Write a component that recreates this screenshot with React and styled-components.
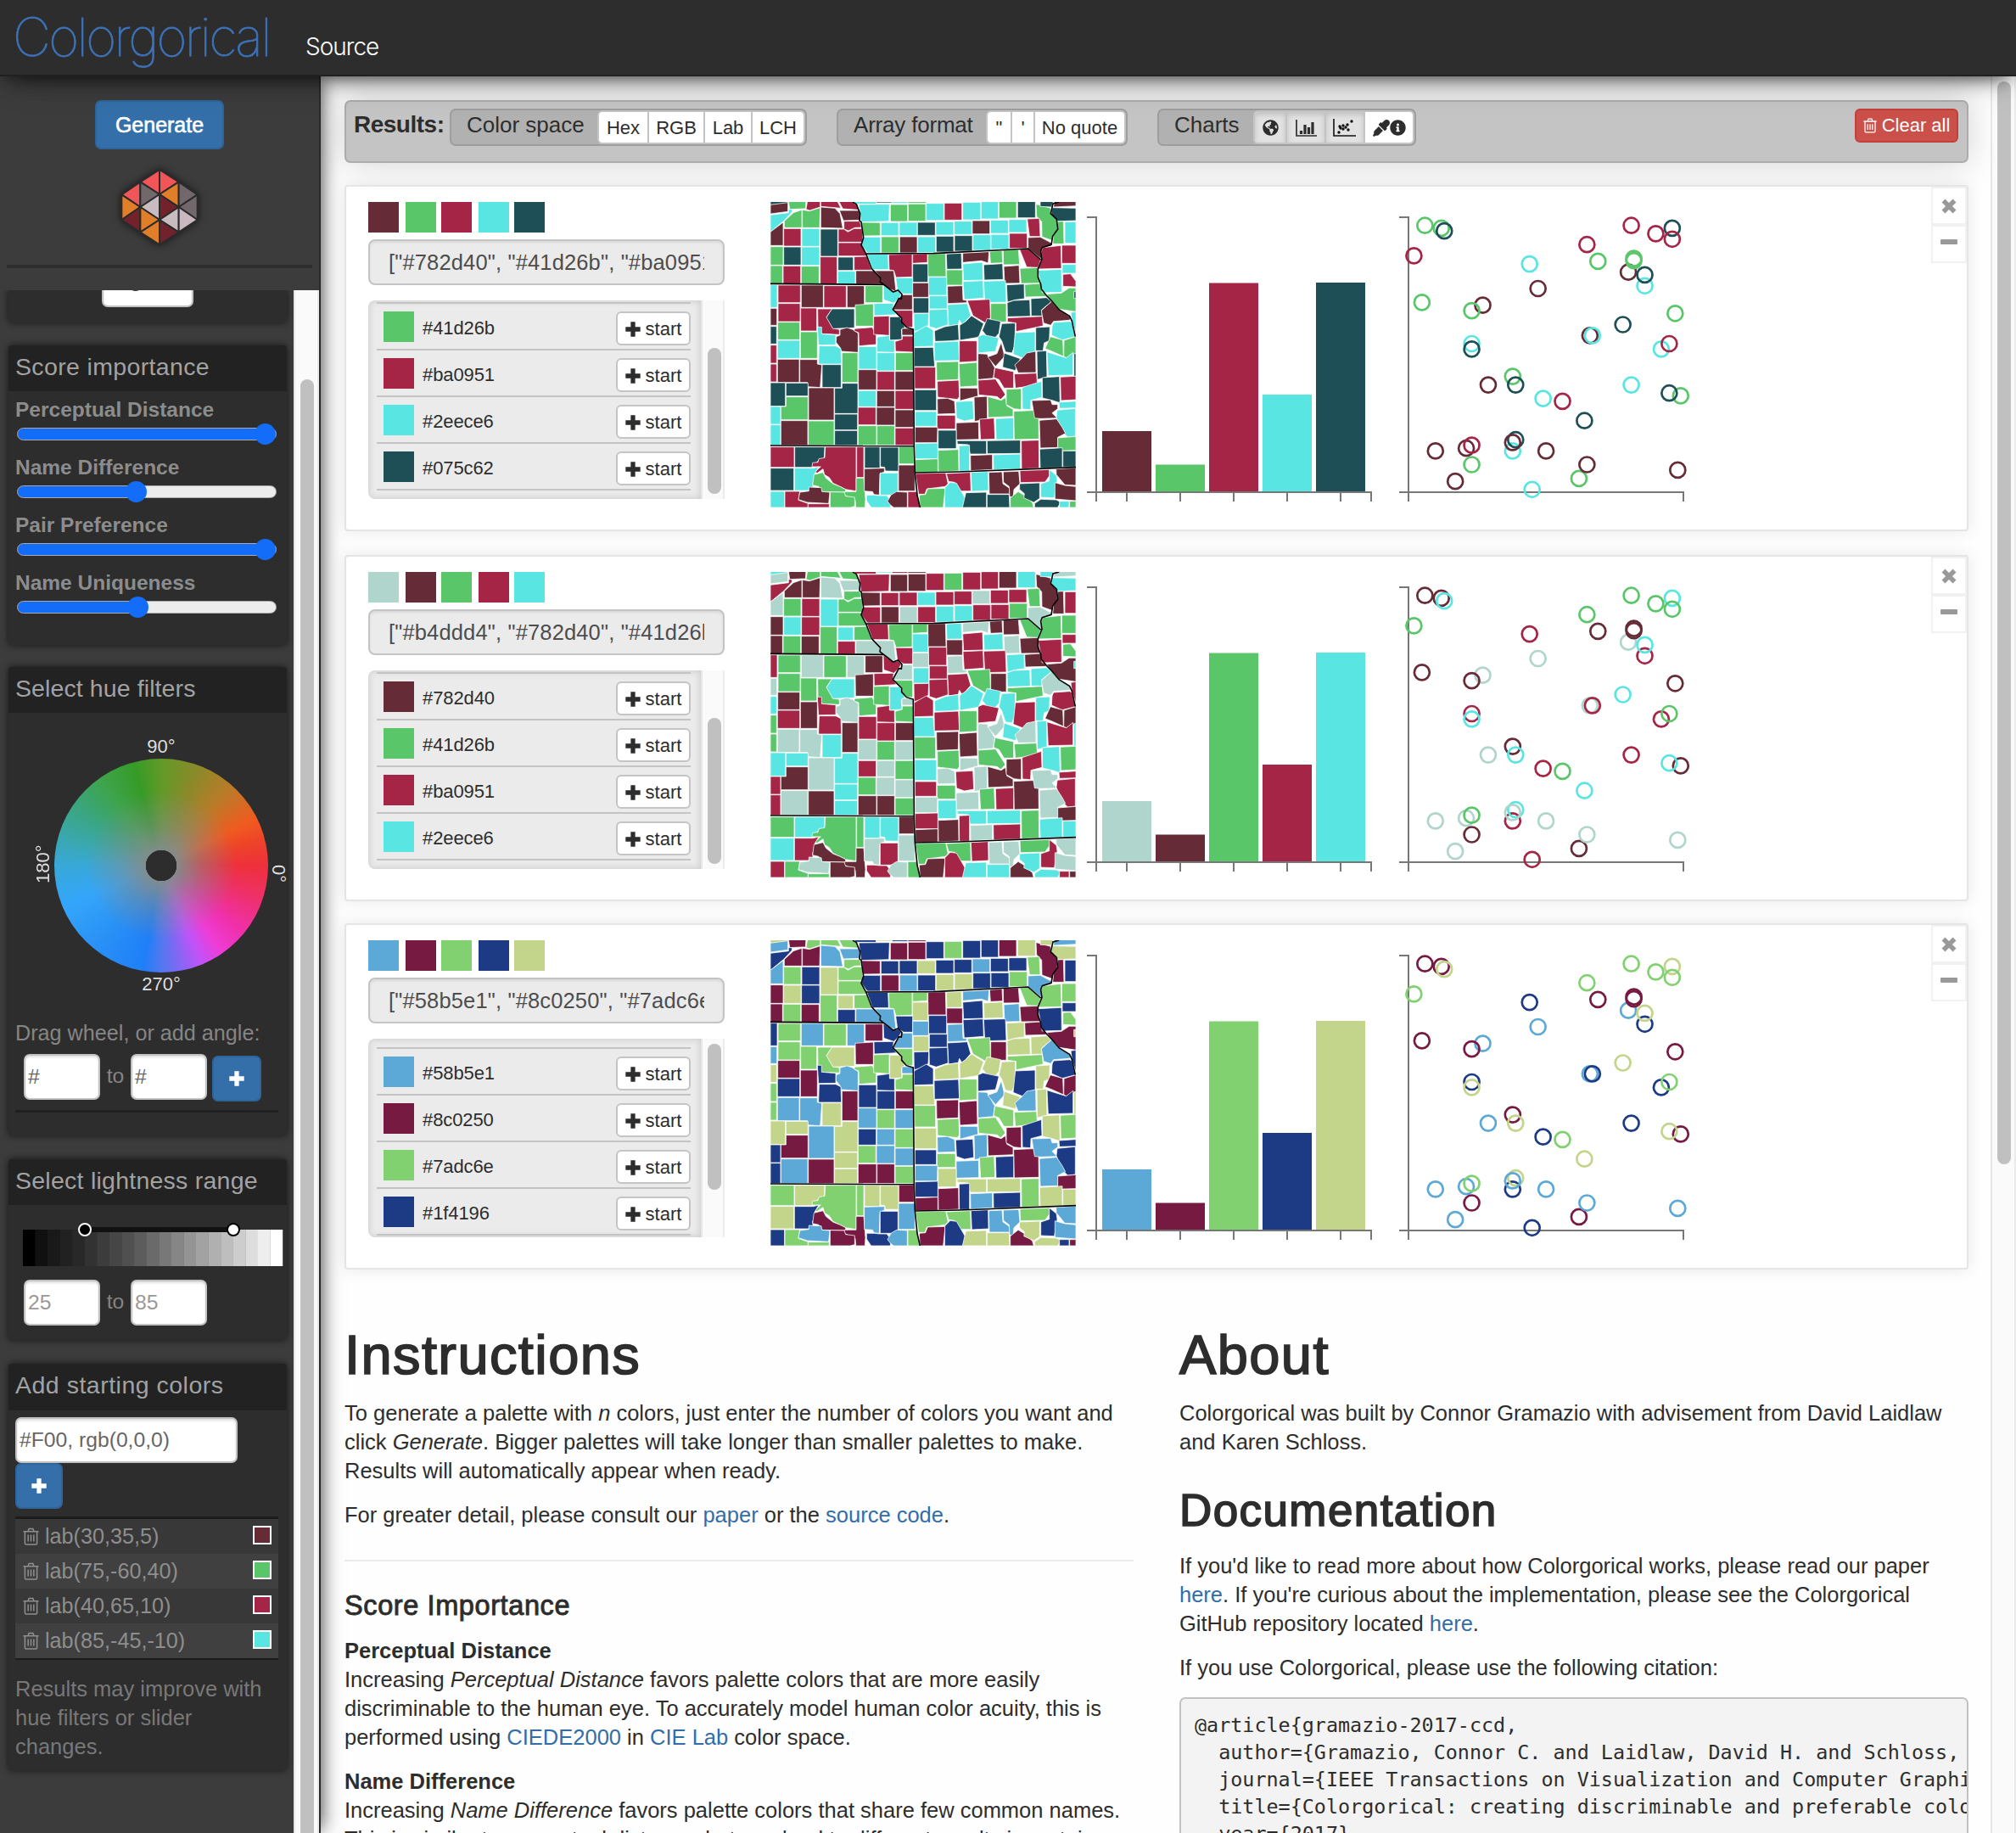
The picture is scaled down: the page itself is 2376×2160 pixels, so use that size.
import React from 'react';
import styled, { createGlobalStyle, css } from 'styled-components';
import { FaGlobeAmericas, FaEyeDropper, FaInfoCircle } from 'react-icons/fa';

const Global = createGlobalStyle`
  * { box-sizing: border-box; }
  html, body { margin: 0; padding: 0; }
  body {
    width: 2376px; height: 2160px; overflow: hidden; background: #fff;
    font-family: "Liberation Sans", Arial, sans-serif; font-size: 25.5px; color: #2d2d2d;
  }
`;

/* ---------- data ---------- */

const PALETTES = [
  { codes: ['#782d40', '#41d26b', '#ba0951', '#2eece6', '#075c62'], fills: ['#652c37', '#5ac66a', '#a42546', '#59e6e2', '#1e4f56'], scrolled: true },
  { codes: ['#b4ddd4', '#782d40', '#41d26b', '#ba0951', '#2eece6'], fills: ['#b0d5cc', '#652c37', '#5ac66a', '#a42546', '#59e6e2'], scrolled: true },
  { codes: ['#58b5e1', '#8c0250', '#7adc6e', '#1f4196', '#c7db8d'], fills: ['#5ca9d8', '#761a42', '#82d170', '#1d3a84', '#c3d48b'], scrolled: false },
];

const COUNTIES = `
4:54 50 115 64|0:54 64 116 56 116 88 54 96|1:118 50 180 50 178 78 165 78 122 80|2:185 50 230 50 230 72 193 84 180 80|2:232 50 290 50 303 76 232 70|2:295 50 350 50 362 64 366 82 310 78
3:54 100 118 92 118 80 130 80 130 90 100 122 54 160|1:103 122 135 92 165 82 165 145 103 145|1:167 82 192 86 230 74 228 145 167 145|0:232 72 282 76 300 95 310 147 232 145|0:298 84 370 84 370 118 312 120
2:314 122 370 122 376 144 352 145 330 156 314 150|0:54 160 99 126 99 208 54 208|2:101 148 162 210|3:165 148 228 211|4:231 150 292 246|2:294 150 314 150 328 160 350 148 378 148 382 196 294 196|2:294 198 378 198 395 245 294 245
1:54 212 99 277|4:101 213 162 277|3:164 213 228 278|2:230 248 290 344|4:293 249 347 296|2:350 248 395 246 412 295 350 295|1:54 279 97 344|2:99 280 161 344|1:163 281 226 344|3:292 299 354 344|0:356 297 425 297 443 322 453 345 356 345|0:423 297 490 297 498 370 470 360 440 335 443 320
3:352 50 428 61|4:428 50 484 57|3:484 50 540 58|1:540 50 604 58|3:366 63 475 62 473 122 374 125 371 95|1:478 63 539 123|1:541 61 603 122|3:605 59 667 119|2:669 58 731 118|3:734 55 797 117|3:799 53 860 114|1:862 52 924 111|4:928 50 991 110
1:993 62 1012 66 1045 76 1045 95 1066 115 1070 150 1050 190 1014 177 1013 124 995 105|4:1008 50 1055 50 1048 72 1008 70|0:1058 50 1134 50 1134 68 1055 72|4:1050 74 1134 76 1134 120 1070 122 1047 95
1:376 126 442 127 442 173 382 174|3:445 127 507 173|3:510 126 573 173|4:574 126 637 172|3:639 124 702 171|3:704 122 766 169|0:768 120 830 167|3:832 118 895 165|3:897 116 960 162|2:962 114 1005 112 1008 176 970 176|1:1070 123 1090 122 1092 202 1052 202 1055 172 1068 152|3:1095 124 1134 200
3:382 178 443 178 443 234 396 234 376 206|1:446 177 508 234|0:511 177 573 234|3:575 177 638 233|4:640 175 702 231|4:705 173 768 228|3:770 170 832 225|3:834 169 897 221|2:899 165 962 218|0:965 180 1008 178 1050 200 1045 210 1015 215 1012 256 965 218
3:395 238 470 238 472 293 415 293|2:472 240 555 238 555 319 498 321 490 296 474 294|2:557 239 609 237 609 268 557 271|1:611 238 673 236 675 318 611 318|4:676 238 729 235 731 291 678 292|0:734 235 827 230 824 270 800 262 734 268|1:829 229 873 226 875 269 832 271|1:877 224 931 222 935 275 878 276|2:935 221 965 220 1010 258 1000 286 960 284
3:734 273 804 267 806 330 737 332|4:808 276 875 272 877 328 810 330|0:879 282 933 278 936 341 882 342|1:936 289 999 286 1009 341 940 342|4:557 273 611 338|1:677 294 733 348|3:613 320 677 384|3:497 322 557 322 557 379 525 379 503 366|0:557 340 613 391|0:680 352 733 350 735 400 748 402 748 410 681 413
3:735 335 806 332 808 394 739 399|3:808 334 885 332 888 408 812 410|4:889 347 951 344 952 396 920 400 892 408|1:953 346 1010 342 1030 388 955 390|3:453 348 488 372 505 368 517 380 508 395 490 412 455 400|1:389 350 451 410|0:518 382 556 382 556 435 488 435 505 398
4:559 393 614 447|3:616 386 679 432|3:680 417 750 413 762 455 745 475 732 488 722 472 718 487 684 492|2:750 402 830 398 832 463 815 482 770 456|1:833 413 888 478|4:891 410 915 402 971 400 973 458 892 460|4:975 396 1030 392 1048 406 1012 436 1015 457 976 457|2:892 464 1015 458 1018 492 922 512 922 482 892 478|0:1048 406 1075 435 1116 462 1112 472 1055 476 1045 490 1020 482 1012 438
2:1018 215 1081 208 1083 289 1000 291 1014 256 1012 228|2:1084 207 1134 271|3:1000 296 1083 292 1084 373 1015 375 1010 345|3:1086 275 1134 275 1134 306 1086 306|2:1088 310 1115 308 1134 334 1134 354 1088 352|1:1030 380 1083 376 1110 358 1134 358 1134 442 1075 433 1045 400|4:1127 370 1134 395|3:1116 445 1134 442 1134 520 1120 475
3:561 449 614 448 612 490 590 505 562 512|3:615 435 680 433 682 488 640 502 616 494|3:562 516 605 492 630 508 630 564 562 566|4:634 510 670 495 718 487 721 542 690 545 636 547|4:723 490 745 476 765 456 808 484 790 532 724 543|4:820 466 868 476 862 518 848 534 820 530 803 508|3:788 530 805 523 862 535 850 582 788 588|4:872 484 920 482 918 562 908 588 885 584 872 545 862 530|3:920 516 990 513 990 586 945 605 912 592|4:992 498 1042 495 1040 545 1022 552 1018 580 992 580|3:1050 492 1055 480 1112 476 1120 480 1132 530 1085 542 1048 525
1:1044 530 1088 542 1090 600 1050 582 1025 572|1:1092 543 1134 530 1134 590 1100 605 1091 600|4:562 569 630 568 635 636 562 636|3:633 550 719 546 722 614 634 616|2:722 545 784 545 784 617 722 621|0:788 590 820 592 847 640 842 677 788 682|0:822 602 855 590 870 550 882 600 850 635|4:880 588 938 608 928 628 920 650 875 638|0:992 582 993 657 930 658 918 630 945 605 960 588|4:996 582 1030 580 1032 672 998 682|3:1032 584 1100 605 1124 586 1124 666 1036 668|4:1127 590 1134 670
2:563 638 638 638 638 714 564 714|1:641 620 719 618 718 682 642 685|1:721 626 784 621 786 704 724 708|2:848 640 914 654 914 712 880 712 862 682 843 674|2:916 662 995 659 998 702 920 712|2:788 684 850 680 885 735 868 752 855 742 790 736|2:644 688 720 684 722 742 715 752 680 748 645 744|0:724 712 786 712 788 740 724 757
4:564 718 641 791|0:644 750 680 748 705 758 708 802 645 804|3:709 760 770 757 773 822 740 828 712 818|0:774 744 820 741 821 820 776 830|1:822 742 870 755 885 745 890 775 912 787 912 812 824 816|1:888 716 941 714 941 788 915 785 888 770|3:944 710 1012 688 1014 745 975 755 974 788 945 786|4:1015 675 1076 671 1078 764 1050 755 1016 747|2:1079 673 1134 670 1134 753 1081 756
3:565 795 641 847|2:643 808 708 857|1:914 794 1002 790 1003 892 916 894|0:978 756 1045 754 1050 770 1070 770 1070 785 1050 800 1068 818 1010 820 988 818|3:1074 762 1134 758 1134 782 1076 784|3:1068 790 1132 784 1132 882 1105 885 1080 860 1065 815
0:711 835 790 832 791 893 711 895|2:793 822 845 818 848 892 797 894|3:850 820 914 817 914 893 852 894|0:565 850 645 850 644 905 565 905|4:647 861 711 926|0:1005 826 1066 821 1085 850 1097 872 1070 886 1070 922 1008 924|1:1070 888 1134 883 1134 932 1070 934
4:714 898 818 898 818 945 760 945 754 912 715 910|4:820 898 938 896 938 943 821 944|2:941 898 1003 896 1004 995 942 998|3:565 908 646 906 646 962 566 962|1:647 932 719 929 720 1005 648 1008|3:721 916 758 914 758 1006 722 1006|0:761 950 839 947 839 1000 762 1004|3:842 948 938 945 938 998 843 1001|4:1006 928 1086 923 1086 993 1008 995|4:1088 934 1134 991|1:566 965 646 962 646 1009 566 1010
2:567 1014 674 1012 682 1050 672 1060 640 1064 607 1068 600 1087 578 1087|2:676 1014 761 1010 763 1076 725 1076 705 1045 684 1042|3:763 1010 824 1007 825 1074 766 1077|0:826 1010 873 1008 876 1050 898 1065 900 1086 828 1086|0:877 1008 932 1006 936 1050 915 1070 912 1098 900 1096 898 1060 878 1045|2:936 1004 1040 1000 1042 1020 1025 1044 938 1046|3:1040 1000 1065 1020 1068 1040 1058 1100 1010 1098 1010 1050 1040 1040|0:1064 998 1134 994 1134 1056 1095 1054 1065 1018|0:1060 1046 1095 1056 1134 1060 1134 1110 1060 1104
1:580 1090 602 1088 610 1068 672 1066 665 1134 583 1134|3:671 1064 690 1045 712 1048 743 1102 735 1134 670 1134|4:745 1082 818 1080 818 1134 733 1134|4:820 1088 898 1088 900 1134 820 1134|1:902 1100 930 1078 950 1090 980 1117 985 1134 902 1134|4:935 1050 1006 1047 1006 1102 985 1116 950 1100 952 1085 935 1070|4:988 1120 1010 1105 1065 1107 1080 1115 1070 1134 988 1134|3:1076 1112 1110 1134|1:1112 1112 1134 1134
3:54 347 78 427|2:81 348 160 410|0:163 348 241 427|2:243 350 322 427|0:325 350 386 427|0:54 430 77 490|2:81 413 159 477|2:161 429 218 510|2:221 432 272 432 253 460 275 500 298 505 298 523 235 520 222 495|4:272 432 351 432 351 499 275 502 252 462|1:354 418 418 414 418 493 355 493|3:420 413 490 412 487 434 500 452 421 456
4:54 494 76 556|1:80 479 158 541|1:160 513 220 607|3:220 496 235 496 235 520 285 524 285 559 224 560|0:300 505 325 498 345 505 364 518 364 586 305 582 300 568 286 550 287 530 300 525|2:352 502 414 497 428 525 428 558 367 563 366 516 350 510|2:419 459 474 457 474 526 419 522|4:476 460 512 460 530 498 517 505 519 540 476 543|2:490 437 557 437 557 497 535 497 518 478 518 465|0:519 501 560 525
2:54 560 76 624|3:79 543 158 607|3:226 563 285 563 303 572 305 627 224 627|3:431 532 475 526 475 543 493 543 493 586 431 584|2:495 547 520 540 520 528 560 528 560 585 496 582|3:366 565 429 645|1:307 587 363 692|3:431 587 494 651|1:496 587 560 650
2:54 627 76 690|0:79 610 156 692|0:158 611 220 611 220 627 236 630 230 710 185 707 185 692 158 692|4:237 629 304 710|0:365 647 429 718|2:431 653 493 719|0:495 653 561 719|4:54 693 107 776|4:109 694 187 740|0:189 711 279 825|4:281 712 307 712 307 695 363 695 363 802 281 802|3:365 721 428 778|0:430 721 493 778|2:495 721 561 787
3:54 777 90 840|1:109 743 187 743 187 824 91 824 91 777 109 777|2:364 780 427 842|0:429 780 493 843|0:495 789 561 851|3:54 842 90 914|0:91 827 186 914|1:188 828 279 914|4:281 804 362 860|4:281 862 362 914|1:364 845 429 914|1:431 845 493 914|2:495 853 561 914
2:54 920 138 992|4:140 920 246 920 244 960 222 970 215 978 201 992 140 992|2:248 920 357 920 357 1076 320 1070 300 1060 275 1048 262 1028 245 1018 240 998 220 1012 208 1010 232 990 201 990 203 976 222 974 225 962 246 958|2:359 920 384 1028|4:387 920 441 995|4:443 921 507 921 507 1006 460 1005 458 992 443 990|1:508 919 562 980
4:54 995 137 1074|3:139 995 205 995 225 990 210 1015 215 1030 202 1050 205 1060 187 1074 139 1074|1:208 1018 240 1010 250 1030 275 1050 300 1060 320 1070 320 1080 235 1078 225 1060 203 1055|1:357 1030 384 1030 390 1105 388 1134 356 1134 354 1108 315 1090 315 1078 357 1078|0:386 997 457 995 457 1008 441 1015 439 1090 420 1088 415 1078 386 1076|3:442 1012 505 1090|0:507 984 565 1076
3:54 1077 104 1134|2:105 1077 158 1077 153 1108 187 1120 187 1134 105 1134|0:158 1080 190 1076 190 1062 234 1064 236 1078 264 1080 260 1120 185 1116 153 1106|2:187 1121 262 1134|1:265 1079 315 1080 320 1094 352 1098 352 1130 336 1134 265 1134|3:394 1090 420 1090 440 1092 465 1092 480 1110 478 1134 410 1134 394 1110|0:480 1090 500 1078 538 1080 538 1134 490 1134 478 1125 468 1112|2:540 1078 573 1078 583 1134 540 1134
`.trim().split(/[|\n]/).map((entry) => {
  const [index, coords] = entry.split(':');
  const n = coords.trim().split(' ').map(Number);
  const pts = n.length === 4 ? [n[0], n[1], n[2], n[1], n[2], n[3], n[0], n[3]] : n;
  return { index: Number(index), points: pts.join(' ') };
});

const STATE_LINES = [
  '345,54 358,62 371,95 369,120 375,125 383,180 375,206 392,237 412,290 443,322 441,336 488,372 505,366 519,380 517,396 508,395 487,434 518,465 518,478 535,497 559,504 562,915 565,1010 573,1090 583,1134',
  '392,237 630,236 965,219 1010,258',
  '1075,54 1053,60 1045,95 1066,115 1070,150 1052,175 1047,205 1015,215 1010,228 1014,256 1000,290 1000,320 1010,345 1012,362 1030,385 1045,400 1075,435 1112,458 1120,475 1132,530',
  '54,343 453,346',
  '54,915 562,917',
  '565,1011 720,1008 1134,992',
];

const BARS = [[1299, 508], [1362, 547.5], [1425, 333.5], [1488, 465], [1551, 333]];

const DOTS = [
  [1325, 646, 0], [1111, 700, 0], [980, 755, 0], [1234, 855, 0], [993, 1018, 0], [868, 1236, 0], [941, 1227, 0], [1130, 1236, 0], [1442, 1299, 0], [915, 1336, 0],
  [843, 492, 1], [882, 501, 1], [1253, 610, 1], [1338, 601, 1], [1338, 608, 1], [836, 746, 1], [954, 773, 1], [1436, 782, 1], [1051, 990, 1], [1449, 1054, 1], [954, 1281, 1], [1208, 1327, 1], [1227, 1281, 0],
  [1091, 619, 3], [1364, 691, 3], [1240, 855, 3], [954, 882, 3], [1403, 900, 3], [1332, 1018, 3], [1123, 1063, 3], [1051, 1236, 3], [1097, 1363, 3],
  [889, 510, 4], [1429, 501, 4], [1364, 655, 4], [1312, 819, 4], [954, 900, 4], [1058, 1018, 4], [1422, 1045, 4], [1221, 1136, 4], [1058, 1199, 4], [1051, 1208, 0],
  [1332, 492, 2], [1390, 519, 2], [1429, 537, 2], [1227, 555, 2], [817, 592, 2], [1422, 882, 2], [1169, 1072, 2], [954, 1217, 2],
].map(([x, y, index]) => ({ x: x / 2.0103 + 1260, y: y / 2.8 + 90, index }));

/* ---------- shared ---------- */

const T = styled.span`
  display: inline-block; white-space: pre;
  letter-spacing: ${(p) => p.$ls || 0}px;
`;
const Link = styled.a`color: #326da8;`;

const ScrollTrack = styled.div`
  flex: none; width: ${(p) => p.$w || 30}px; height: 100%; background: #fafafa;
  border-left: 2px solid #e6e6e6; border-right: 2px solid #ebebeb;
  padding-left: 6px; padding-top: ${(p) => p.$top}px;
`;
const ScrollThumb = styled.div`
  width: 16px; height: ${(p) => p.$h}px; border-radius: 8px; background: #c0c0c0;
`;

const PlusIcon = ({ size = 18 }) => (
  <svg width={size} height={size} viewBox="0 0 17 17"><path d="M8.5 0.3V16.7M0.3 8.5H16.7" stroke="currentColor" strokeWidth="5" /></svg>
);
const TrashIcon = ({ w = 20 }) => (
  <svg width={w} height={w * 1.1} viewBox="0 0 20 22" fill="none" stroke="currentColor" strokeWidth="1.6">
    <path d="M0.5 5H19.5M2.5 5V19.5Q2.5 21 4 21H16Q17.500 21 17.500 19.500V5M6.500 4.500L7.500 1.500H12.500L13.500 4.500M6.500 9V17.500M10 9V17.500M13.500 9V17.500" />
  </svg>
);

/* ---------- header ---------- */

const Page = styled.div`
  width: 2376px; height: 2160px; overflow: hidden; display: flex; flex-direction: column;
`;
const Header = styled.header`
  position: relative; z-index: 2; flex: none; height: 90px; display: flex;
  background: #2d2d2d; border-bottom: 2px solid #202020; padding-left: 15px;
  box-shadow: 0 8px 24px -8px rgba(0, 0, 0, 0.85), 0 12px 50px -20px rgba(0, 0, 0, 0.4);
`;
const Brand = styled.div`
  width: 345px; font-family: Inter, Roboto, sans-serif; font-weight: 100; font-size: 62px; line-height: 87px;
  color: #3d72b8; letter-spacing: -2.6px; white-space: nowrap; -webkit-text-stroke: 0.9px #3d72b8;
`;
const NavLink = styled.div`
  font-family: Inter, Roboto, sans-serif; font-weight: 300; font-size: 28px; line-height: 110px; color: #fff; letter-spacing: -1px;
`;
const Body = styled.div`display: flex; height: 2070px;`;

/* ---------- sidebar ---------- */

const Sidebar = styled.aside`
  position: relative; z-index: 1; flex: none; width: 378px; height: 2070px; background: #3c3c3c; border-right: 2px solid #2a2a2a;
  display: flex; flex-direction: column; box-shadow: 4px 0 22px -4px rgba(0, 0, 0, 0.8);
`;
const SideTop = styled.div`
  flex: none; height: 252px; padding: 28px 8px 0; display: flex; flex-direction: column; align-items: center;
`;
const Generate = styled.button`
  width: 152px; height: 58px; padding: 0; border-radius: 7px; border: 2px solid #2f6499; background: #346fa9;
  color: #fff; font: 25px "Liberation Sans", Arial, sans-serif; -webkit-text-stroke: 0.6px #fff;
`;
const Logo = styled.svg`
  margin-top: 12px; width: 112px; height: 112px; filter: drop-shadow(0 0 5px rgba(0, 0, 0, 0.65));
`;
const TopRule = styled.div`margin-top: 12px; width: 360px; height: 4px; background: #2d2d2d;`;
const SideScroll = styled.div`flex: none; height: 1818px; display: flex; overflow: hidden;`;
const Panels = styled.div`flex: none; width: 346px; padding-left: 10px; display: flex; flex-direction: column;`;
const Panel = styled.section`
  flex: none; width: 328px; height: ${(p) => p.$h}px; margin-bottom: ${(p) => p.$gap}px; background: #2d2d2d;
  border-radius: 4px; box-shadow: 0 0 9px rgba(0, 0, 0, 0.65); color: #8c8c8c;
`;
const PanelTitle = styled.h3`
  margin: 0; height: ${(p) => p.$h || 54}px; padding-left: 8px; border-radius: 4px 4px 0 0; background: #222;
  font-weight: 400; font-size: 28.5px; line-height: 50px; color: #a2a2a2;
`;
const CountClip = styled(Panel)`
  height: 38px; margin-bottom: 27px; display: flex; justify-content: center; align-items: flex-start; overflow: hidden; border-radius: 0 0 4px 4px;
`;
const Field = styled.div`
  width: ${(p) => p.$w || 90}px; height: 54px; border-radius: 7px; border: 2px solid #c2c2c2; background: #fff;
  box-shadow: inset 0 2px 3px rgba(0, 0, 0, 0.12); padding-left: 3px; font-size: 24.7px; line-height: 50px; color: ${(p) => p.$c || '#666'};
`;
const CountField = styled(Field)`
  width: 108px; height: 54px; margin-top: -34px; padding-left: 31px; color: #444; line-height: 50px;
`;
const Sliders = styled.div`padding: 1px 0 0 8px;`;
const SliderRow = styled.div`height: 68px;`;
const SliderLabel = styled.div`font-weight: 700; font-size: 24.500px; line-height: 42px; white-space: nowrap; color: #8c8c8c;`;
const Track = styled.div`
  position: relative; margin: 0 0 0 2px; width: 306px; height: 15px; border-radius: 8px; border: 1.5px solid #aaa;
  background: linear-gradient(to right, #146df8 ${(p) => p.$x}px, #ececec ${(p) => p.$x}px);
`;
const Thumb = styled.div`
  position: absolute; top: -6.5px; left: ${(p) => p.$x - 13.5}px; width: 25px; height: 25px; border-radius: 50%; background: #146df8;
`;
const WheelArea = styled.div`height: 346px; padding-top: 26px; display: flex; flex-direction: column; width: 328px;`;
const WheelLabel = styled.div`height: 28px; line-height: 28px; font-size: 22px; color: #dedede; padding-left: 32px; text-align: center;`;
const WheelRow = styled.div`display: flex; align-items: center; height: 252px; width: 328px;`;
const SideLabel = styled.div`
  flex: none; writing-mode: vertical-rl; transform: rotate(${(p) => p.$r}deg); font-size: 22px; line-height: 24px; color: #dedede;
  width: 24px; height: 60px; text-align: center; margin-left: ${(p) => p.$ml}px; margin-top: ${(p) => p.$mt || 0}px;
`;
const Wheel = styled.div`
  flex: none; width: 252px; height: 252px; border-radius: 50%; margin-left: ${(p) => p.$ml}px;
  background:
    radial-gradient(circle, #2d2d2d 0 18px, rgba(130, 140, 140, 0.95) 18.500px, rgba(130, 140, 140, 0.5) 46px, rgba(130, 140, 140, 0) 88px),
    conic-gradient(#619a28 0deg, #8a8a2a 20deg, #bb7a28 42deg, #f05a20 64deg, #ee4528 75deg, #ee303c 90deg, #ee3068 108deg, #f030ac 130deg,
      #ee3cd6 145deg, #c054f8 158deg, #8068f4 170deg, #5278f0 180deg, #1f7ff8 190deg, #2a92f6 220deg, #34a6fa 248deg, #38a8d8 270deg,
      #3aa8b0 285deg, #3aa686 302deg, #3ea44c 325deg, #369b26 345deg, #619a28 360deg);
`;
const Hint = styled.div`padding-left: 8px; height: 56px; font-size: 25.2px; line-height: 62px; color: #858585; white-space: nowrap;`;
const FieldRow = styled.div`
  display: flex; align-items: flex-start; padding-left: 18px; height: ${(p) => p.$h}px; padding-top: ${(p) => p.$pt || 0}px; font-size: 24.7px; line-height: 52px; color: #858585;
`;
const To = styled.span`width: 36px; text-align: center;`;
const AddButton = styled.button`
  width: ${(p) => p.$w}px; height: 54px; margin: ${(p) => p.$m || 0}; padding: 0; border: 2px solid #2f6499; border-radius: 7px; background: #346fa9; color: #fff;
  display: flex; align-items: center; justify-content: center;
`;
const DarkRule = styled.div`margin-left: 8px; width: 310px; height: 3px; background: #202020;`;
const Lightness = styled.svg`display: block; margin: 20px 0 0 17px; width: 306px; height: 52px; overflow: visible;`;
const StartForm = styled.div`padding: 8px 0 0 8px;`;
const StartList = styled.div`margin: 9px 0 0 8px; width: 310px; border-top: 3px solid #1c1c1c; border-bottom: 2px solid #1c1c1c;`;
const StartRow = styled.div`
  height: 41px; background: ${(p) => (p.$alt ? '#404040' : '#383838')}; display: flex; align-items: center; padding: 0 8px 0 9px; color: #8e8e8e; font-size: 25.2px;
  > span { margin-left: 7px; flex: 1; line-height: 41px; }
`;
const Chip = styled.i`width: 22px; height: 22px; border: 2px solid #fff; background: ${(p) => p.$c}; margin-top: -4px;`;
const Note = styled.p`margin: 17px 0 0 8px; line-height: 34px; color: #787878; white-space: nowrap;`;

const LogoMark = () => {
  const tri = [
    ['431,688 497,643 497,732', '#f05558'], ['431,688 431,777 497,732', '#e07e2a'], ['431,777 497,732 497,821', '#71222b'],
    ['497,643 565,600 565,687', '#f05558'], ['497,643 497,732 565,687', '#72686c'], ['497,732 565,687 565,777', '#c9bcc0'],
    ['497,732 497,821 565,777', '#e07e2a'], ['497,821 565,777 565,865', '#e07e2a'],
    ['565,600 633,643 565,687', '#f05558'], ['565,687 633,643 633,732', '#e07e2a'], ['565,687 565,777 633,732', '#71222b'],
    ['565,777 633,732 633,821', '#c9bcc0'], ['565,777 565,865 633,821', '#71222b'],
    ['633,643 699,688 633,732', '#72686c'], ['699,688 699,777 633,732', '#72686c'], ['633,732 633,821 699,777', '#c9b8c0'],
  ];
  return (
    <Logo viewBox="397 564 336 336">
      {tri.map(([p, c]) => <polygon key={p} points={p} fill={c} stroke="#2b2b2b" strokeWidth="6" strokeLinejoin="round" />)}
    </Logo>
  );
};

const SLIDERS = [['Perceptual Distance', 292], ['Name Difference', 140], ['Pair Preference', 292], ['Name Uniqueness', 142]];
const START = [['lab(30,35,5)', '#652c37'], ['lab(75,-60,40)', '#5ac66a'], ['lab(40,65,10)', '#a42546'], ['lab(85,-45,-10)', '#59e6e2']];
const GREYS = [0, 16, 25, 33, 40, 50, 60, 70, 80, 92, 106, 120, 134, 148, 162, 176, 190, 205, 221, 238, 255];

const Side = () => (
  <Sidebar>
    <SideTop>
      <Generate>Generate</Generate>
      <LogoMark />
      <TopRule />
    </SideTop>
    <SideScroll>
      <Panels>
        <CountClip><CountField>5</CountField></CountClip>
        <Panel $h={353} $gap={26}>
          <PanelTitle><T $ls={0.35}>Score importance</T></PanelTitle>
          <Sliders>
            {SLIDERS.map(([name, x]) => (
              <SliderRow key={name}>
                <SliderLabel>{name}</SliderLabel>
                <Track $x={x}><Thumb $x={x} /></Track>
              </SliderRow>
            ))}
          </Sliders>
        </Panel>
        <Panel $h={552} $gap={28}>
          <PanelTitle><T $ls={0.1}>Select hue filters</T></PanelTitle>
          <WheelArea>
            <WheelLabel>90°</WheelLabel>
            <WheelRow>
              <SideLabel $r={180} $ml={29} $mt={-4}>180°</SideLabel>
              <Wheel $ml={1} />
              <SideLabel $r={0} $ml={0} $mt={20}>0°</SideLabel>
            </WheelRow>
            <WheelLabel>270°</WheelLabel>
          </WheelArea>
          <Hint>Drag wheel, or add angle:</Hint>
          <FieldRow $h={66}>
            <Field>#</Field><To>to</To><Field>#</Field>
            <AddButton $w={58} $m="2px 0 0 6px"><PlusIcon /></AddButton>
          </FieldRow>
          <DarkRule />
        </Panel>
        <Panel $h={213} $gap={28}>
          <PanelTitle><T $ls={0.25}>Select lightness range</T></PanelTitle>
          <Lightness viewBox="0 0 306 52">
            {GREYS.map((v, i) => <rect key={v} x={i * 14.571} y="9" width="14.8" height="43" fill={`rgb(${v},${v},${v})`} />)}
            <path d="M73 9H248" stroke="#111" strokeWidth="6" />
            <circle cx="73" cy="9" r="7" fill="#000" stroke="#fff" strokeWidth="2" />
            <circle cx="248" cy="9" r="7" fill="#fff" stroke="#000" strokeWidth="2" />
          </Lightness>
          <FieldRow $h={70} $pt={16}>
            <Field $c="#999">25</Field><To>to</To><Field $c="#999">85</Field>
          </FieldRow>
        </Panel>
        <Panel $h={479} $gap={0}>
          <PanelTitle $h={55}><T $ls={0.5}>Add starting colors</T></PanelTitle>
          <StartForm>
            <Field $w={262}>#F00, rgb(0,0,0)</Field>
            <AddButton $w={56}><PlusIcon /></AddButton>
          </StartForm>
          <StartList>
            {START.map(([name, c], i) => (
              <StartRow key={name} $alt={i % 2}><TrashIcon w={19} /><span>{name}</span><Chip $c={c} /></StartRow>
            ))}
          </StartList>
          <Note>Results may improve with<br />hue filters or slider<br />changes.</Note>
        </Panel>
      </Panels>
      <ScrollTrack $top={105}><ScrollThumb $h={1800} /></ScrollTrack>
    </SideScroll>
  </Sidebar>
);

/* ---------- results ---------- */

const Main = styled.main`flex: none; width: 1968px; height: 2070px; padding: 28px 26px 0 28px; overflow: hidden; background: #fefefe;`;
const Toolbar = styled.div`
  height: 74px; display: flex; background: #c4c4c4; border: 2px solid #acacac; border-radius: 7px; padding: 8px 10px 0 9px;
  box-shadow: 0 0 40px rgba(0, 0, 0, 0.18);
`;
const ToolTitle = styled.b`width: 113px; font-size: 28px; letter-spacing: -0.5px; line-height: 37px; white-space: nowrap;`;
const Group = styled.div`
  height: 44px; width: ${(p) => p.$w}px; margin-right: ${(p) => p.$gap}px; display: flex; justify-content: space-between;
  background: #b1b1b1; border: 2px solid #9e9e9e; border-radius: 7px; padding-left: 18px; font-size: 26px; line-height: 35px; white-space: nowrap;
`;
const Buttons = styled.div`display: flex; border: 2px solid #c4c4c4; border-radius: 6px; background: #fff; overflow: hidden; height: 40px;`;
const Cell = styled.div`
  width: ${(p) => p.$w}px; height: 36px; padding-top: 1px; display: flex; align-items: center; justify-content: center; font-size: 22px; color: #2d2d2d;
  ${(p) => p.$on && css`background: #e2e2e2; box-shadow: inset 0 3px 6px rgba(0, 0, 0, 0.15);`}
  & + & { border-left: 2px solid #c4c4c4; }
`;
const Clear = styled.button`
  margin-left: auto; width: 122px; height: 40px; border-radius: 6px; border: 2px solid #c4403a; background: #ca5049; color: #fff;
  font: 22px "Liberation Sans", Arial, sans-serif; padding: 0; display: flex; align-items: center; justify-content: center; gap: 6px; white-space: nowrap;
`;
const Card = styled.section`
  height: 408px; margin-top: ${(p) => p.$mt}px; background: #fff; border: 2px solid #e5e5e5; border-radius: 4px; display: flex; padding-left: 26px;
  box-shadow: 0 0 20px rgba(0, 0, 0, 0.09);
`;
const Info = styled.div`width: 420px; padding-top: 18px;`;
const Swatches = styled.div`display: flex; height: 36px; > i { margin-right: 6px; } > i:nth-child(odd) { margin-right: 8px; }`;
const Swatch = styled.i`flex: none; width: 36px; height: 36px; background: ${(p) => p.$c};`;
const CodeField = styled.div`
  margin-top: 8px; height: 54px; border: 2px solid #c4c4c4; border-radius: 8px; background: #ebebeb; padding: 0 22px;
  box-shadow: inset 0 2px 3px rgba(0, 0, 0, 0.08);
`;
const CodeText = styled.div`overflow: hidden; white-space: nowrap; line-height: 50px; color: #4d4d4d; letter-spacing: 0.15px;`;
const ListBox = styled.div`margin-top: 18px; height: 234px; display: flex; border-radius: 8px 0 0 8px; overflow: hidden;`;
const List = styled.div`
  flex: 1; background: #ebebeb; padding: ${(p) => (p.$scrolled ? 2 : 10)}px 12px 0 10px; overflow: hidden;
  box-shadow: inset 0 0 9px rgba(0, 0, 0, 0.16);
`;
const ListRow = styled.div`
  height: 55px; border-top: 2px solid #c4c4c4; display: flex; padding: 9px 0 0 8px; font-size: 22px;
  &:last-child { border-bottom: 2px solid #c4c4c4; height: 57px; }
`;
const Code = styled.span`margin-left: 10px; flex: 1; line-height: 40px; letter-spacing: -0.1px;`;
const Start = styled.button`
  width: 88px; height: 40px; border: 2px solid #c4c4c4; border-radius: 6px; background: #fff; padding: 1px 0 0; color: #2d2d2d;
  font: 22px "Liberation Sans", Arial, sans-serif; display: flex; align-items: center; justify-content: center; gap: 6px;
`;
const MapSvg = styled.svg`flex: none; width: 360px; height: 360px; margin: 18px 0 0 54px; background: #fff;`;
const Chart = styled.svg`flex: none; width: ${(p) => p.$w}px; height: 360px; margin: 18px 0 0 ${(p) => p.$ml}px;`;
const Tools = styled.div`margin-left: auto; width: 42px;`;
const Tool = styled.div`
  height: 45px; border: 2px solid #f1f1f1; display: flex; align-items: center; justify-content: center; color: #999; padding-bottom: ${(p) => p.$pb || 0}px;
`;

const CountyMap = ({ fills }) => (
  <MapSvg viewBox="54 54 1080 1080">
    {COUNTIES.map((c, i) => <polygon key={i} points={c.points} fill={fills[c.index]} stroke="#fff" strokeWidth="2.2" strokeLinejoin="round" />)}
    {STATE_LINES.map((p) => <polyline key={p} points={p} fill="none" stroke="#000" strokeWidth="4.8" />)}
  </MapSvg>
);
const BarChart = ({ fills }) => (
  <Chart $w={340} $ml={12} viewBox="1280 238 340 360">
    {BARS.map(([x, y], i) => <rect key={x} x={x} y={y} width="58" height={580 - y} fill={fills[i]} />)}
    <path d="M1281 256H1292V591M1281 580H1616V591M1328 580V591M1391 580V591M1454 580V591M1517 580V591M1580 580V591" fill="none" stroke="#777" strokeWidth="2" />
  </Chart>
);
const Scatter = ({ fills }) => (
  <Chart $w={350} $ml={28} viewBox="1648 238 350 360">
    <path d="M1649 256H1660V591M1649 580H1984V591" fill="none" stroke="#777" strokeWidth="2" />
    {DOTS.map((d, i) => <circle key={i} cx={d.x} cy={d.y} r="9" fill="none" stroke={fills[d.index]} strokeWidth="2.7" />)}
  </Chart>
);

const Result = ({ palette, mt }) => {
  const first = palette.scrolled ? 1 : 0;
  return (
    <Card $mt={mt}>
      <Info>
        <Swatches>{palette.fills.map((c) => <Swatch key={c} $c={c} />)}</Swatches>
        <CodeField><CodeText>{'[' + palette.codes.map((c) => `"${c}"`).join(', ') + ']'}</CodeText></CodeField>
        <ListBox>
          <List $scrolled={palette.scrolled}>
            {palette.codes.slice(first, first + 4).map((code, i) => (
              <ListRow key={code}>
                <Swatch $c={palette.fills[i + first]} />
                <Code>{code}</Code>
                <Start><PlusIcon /><span>start</span></Start>
              </ListRow>
            ))}
          </List>
          <ScrollTrack $w={28} $top={palette.scrolled ? 56 : 6}><ScrollThumb $h={172} /></ScrollTrack>
        </ListBox>
      </Info>
      <CountyMap fills={palette.fills} />
      <BarChart fills={palette.fills} />
      <Scatter fills={palette.fills} />
      <Tools>
        <Tool><svg width="18" height="18" viewBox="0 0 18 18"><path d="M2.500 2.500L15.500 15.500M15.500 2.500L2.500 15.500" stroke="currentColor" strokeWidth="5.500" /></svg></Tool>
        <Tool $pb={5}><svg width="20" height="6" viewBox="0 0 20 6"><rect width="20" height="6" rx="1" fill="currentColor" /></svg></Tool>
      </Tools>
    </Card>
  );
};

/* ---------- docs ---------- */

const Docs = styled.div`display: flex; gap: 54px; margin-top: 62px;`;
const Col = styled.div`width: 930px; flex: none;`;
const H1 = styled.h1`
  margin: 0; height: ${(p) => p.$h || 90}px; font-weight: 400; font-size: ${(p) => p.$s || 65}px; line-height: ${(p) => p.$lh || 78}px;
  letter-spacing: 1.4px; -webkit-text-stroke: 1.7px #2d2d2d; white-space: nowrap;
`;
const P = styled.p`margin: 0 0 ${(p) => (p.$mb === undefined ? 18 : p.$mb)}px; line-height: 34px; white-space: nowrap;`;
const Rule = styled.div`height: 2px; background: #ebebeb; margin: 36px 0 34px;`;
const H3 = styled.h3`margin: 0 0 18px; font-weight: 400; font-size: 32.5px; letter-spacing: 0.6px; line-height: 36px; -webkit-text-stroke: 0.9px #2d2d2d;`;
const Pre = styled.pre`
  margin: 0; height: 220px; border: 2px solid #c2c2c2; border-radius: 7px; background: #f3f3f3; padding: 15px 16px; overflow: hidden;
  font: 23.400px/32px "DejaVu Sans Mono", monospace;
`;

export default function App() {
  return (
    <Page>
      <Global />
      <Header><Brand>Colorgorical</Brand><NavLink>Source</NavLink></Header>
      <Body>
        <Side />
        <Main>
          <Toolbar>
            <ToolTitle>Results:</ToolTitle>
            <Group $w={421} $gap={35}>
              <span>Color space</span>
              <Buttons><Cell $w={57}>Hex</Cell><Cell $w={66}>RGB</Cell><Cell $w={56}>Lab</Cell><Cell $w={62}>LCH</Cell></Buttons>
            </Group>
            <Group $w={343} $gap={35}>
              <T $ls={-0.2}>Array format</T>
              <Buttons><Cell $w={27}>"</Cell><Cell $w={27}>'</Cell><Cell $w={107}>No quote</Cell></Buttons>
            </Group>
            <Group $w={305} $gap={0}>
              <span>Charts</span>
              <Buttons>
                <Cell $w={36} $on><FaGlobeAmericas size={19} /></Cell>
                <Cell $w={46} $on>
                  <svg width="25" height="20" viewBox="0 0 25 20" fill="none" stroke="#2d2d2d"><path d="M1 0V19H25" strokeWidth="1.700" /><path d="M6.500 13V17M11 6V17M15.500 9V17M20 3V17" strokeWidth="3.200" /></svg>
                </Cell>
                <Cell $w={46} $on>
                  <svg width="28" height="22" viewBox="0 0 28 22" fill="#111"><path d="M1 0V20H27" fill="none" stroke="#111" strokeWidth="1.600" />{[[7, 16], [8, 9], [12, 12], [12, 8], [15, 10], [17, 7], [18, 13], [22, 3], [9, 11]].map(([x, y]) => <circle key={`${x}-${y}`} cx={x} cy={y} r="1.700" />)}</svg>
                </Cell>
                <Cell $w={58}><FaEyeDropper size={20} /><FaInfoCircle size={19} /></Cell>
              </Buttons>
            </Group>
            <Clear><TrashIcon w={16} />Clear all</Clear>
          </Toolbar>
          <Result palette={PALETTES[0]} mt={26} />
          <Result palette={PALETTES[1]} mt={28} />
          <Result palette={PALETTES[2]} mt={26} />
          <Docs>
            <Col>
              <H1>Instructions</H1>
              <P>To generate a palette with <i>n</i> colors, just enter the number of colors you want and<br />click <i>Generate</i>. Bigger palettes will take longer than smaller palettes to make.<br />Results will automatically appear when ready.</P>
              <P>For greater detail, please consult our <Link>paper</Link> or the <Link>source code</Link>.</P>
              <Rule />
              <H3>Score Importance</H3>
              <P><b>Perceptual Distance</b><br />Increasing <i>Perceptual Distance</i> favors palette colors that are more easily<br />discriminable to the human eye. To accurately model human color acuity, this is<br />performed using <Link>CIEDE2000</Link> in <Link>CIE Lab</Link> color space.</P>
              <P><b>Name Difference</b><br />Increasing <i>Name Difference</i> favors palette colors that share few common names.<br />This is similar to perceptual distance, but can lead to different results in certain</P>
            </Col>
            <Col>
              <H1>About</H1>
              <P $mb={32}>Colorgorical was built by Connor Gramazio with advisement from David Laidlaw<br />and Karen Schloss.</P>
              <H1 $s={53} $h={80} $lh={64}>Documentation</H1>
              <P>If you'd like to read more about how Colorgorical works, please read our paper<br /><Link>here</Link>. If you're curious about the implementation, please see the Colorgorical<br />GitHub repository located <Link>here</Link>.</P>
              <P>If you use Colorgorical, please use the following citation:</P>
              <Pre>{`@article{gramazio-2017-ccd,
  author={Gramazio, Connor C. and Laidlaw, David H. and Schloss, Karen B.},
  journal={IEEE Transactions on Visualization and Computer Graphics},
  title={Colorgorical: creating discriminable and preferable color palettes},
  year={2017}
}`}</Pre>
            </Col>
          </Docs>
        </Main>
        <ScrollTrack $top={6}><ScrollThumb $h={1276} /></ScrollTrack>
      </Body>
    </Page>
  );
}
